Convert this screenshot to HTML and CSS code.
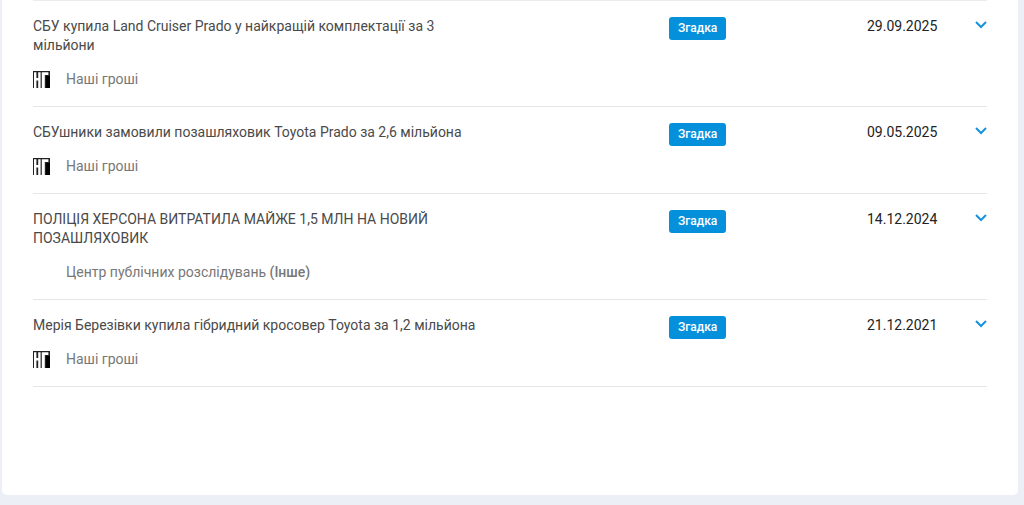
FILE: index.html
```html
<!DOCTYPE html>
<html lang="uk">

<head>
    <meta charset="UTF-8">
    <meta name="viewport" content="width=device-width, initial-scale=1.0">
    <title>Згадки</title>
    <link rel="stylesheet" href="styles.css">
</head>

<body>
    <!-- icons shared by the rows -->
    <svg class="sprite" width="0" height="0" aria-hidden="true">
        <symbol id="logo" viewBox="0 0 17 17">
            <path d="M0 0h17v17H0z" fill="#222" />
            <path d="M1 1.2h2.4V7h1.8V1.2h2.4V17H5.2V9.5H3.4V17H1z" fill="#fff" />
            <path d="M8.8 1.2h6.6V4h-3.6v13H8.8z" fill="#fff" />
            <path d="M13 5h4v12h-4z" fill="#000" />
        </symbol>
        <symbol id="chevron" viewBox="0 0 12 8">
            <path d="M1 1l5 5 5-5" fill="none" stroke="#1593dc" stroke-width="2" />
        </symbol>
    </svg>

    <main class="card">
        <ul class="list">
            <li class="row">
                <div class="info">
                    <a class="title" href="#">СБУ купила Land Cruiser Prado у найкращій комплектації за 3 мільйони</a>
                    <div class="source">
                        <span class="logo"><svg><use href="#logo" /></svg></span>
                        <span>Наші гроші</span>
                    </div>
                </div>
                <div class="type"><span class="badge">Згадка</span></div>
                <time class="date" datetime="2025-09-29">29.09.2025</time>
                <button class="toggle" type="button" aria-label="Розгорнути"><svg><use href="#chevron" /></svg></button>
            </li>
            <li class="row">
                <div class="info">
                    <a class="title" href="#">СБУшники замовили позашляховик Toyota Prado за 2,6 мільйона</a>
                    <div class="source">
                        <span class="logo"><svg><use href="#logo" /></svg></span>
                        <span>Наші гроші</span>
                    </div>
                </div>
                <div class="type"><span class="badge">Згадка</span></div>
                <time class="date" datetime="2025-05-09">09.05.2025</time>
                <button class="toggle" type="button" aria-label="Розгорнути"><svg><use href="#chevron" /></svg></button>
            </li>
            <li class="row">
                <div class="info">
                    <a class="title" href="#">ПОЛІЦІЯ ХЕРСОНА ВИТРАТИЛА МАЙЖЕ 1,5 МЛН НА НОВИЙ ПОЗАШЛЯХОВИК</a>
                    <div class="source">
                        <span class="logo"></span>
                        <span>Центр публічних розслідувань <b>(Інше)</b></span>
                    </div>
                </div>
                <div class="type"><span class="badge">Згадка</span></div>
                <time class="date" datetime="2024-12-14">14.12.2024</time>
                <button class="toggle" type="button" aria-label="Розгорнути"><svg><use href="#chevron" /></svg></button>
            </li>
            <li class="row">
                <div class="info">
                    <a class="title" href="#">Мерія Березівки купила гібридний кросовер Toyota за 1,2 мільйона</a>
                    <div class="source">
                        <span class="logo"><svg><use href="#logo" /></svg></span>
                        <span>Наші гроші</span>
                    </div>
                </div>
                <div class="type"><span class="badge">Згадка</span></div>
                <time class="date" datetime="2021-12-21">21.12.2021</time>
                <button class="toggle" type="button" aria-label="Розгорнути"><svg><use href="#chevron" /></svg></button>
            </li>
        </ul>
    </main>
</body>

</html>
```
FILE: styles.css
```css
* {
    box-sizing: border-box;
}

body {
    margin: 0;
    padding: 0 6px 10px 2px;
    background-color: #ecf0f6;
    font-family: Roboto, Arial, sans-serif;
    font-size: 14px;
    line-height: 19px;
    color: #222;
}

.sprite {
    position: absolute;
}

.card {
    background-color: #fff;
    border-radius: 0 0 5px 5px;
    padding: 0 31px 108px;
}

.list {
    list-style: none;
    margin: 0;
    padding: 0;
    border-top: 1px solid #ececee;
}

.row {
    display: grid;
    grid-template-columns: calc(100% * 2 / 3) 1fr 106px 14px;
    padding: 16px 0;
    border-bottom: 1px solid #e6e6e8;
}

.title {
    display: block;
    max-width: 72%;
    color: #4a4a4a;
    text-decoration: none;
}

.source {
    display: flex;
    align-items: center;
    margin: 14px 0 1px;
    height: 20px;
    color: #777;
}

.source b {
    font-weight: 500;
}

.logo {
    width: 33px;
}

.logo svg {
    display: block;
    width: 17px;
    height: 17px;
}

.badge {
    display: block;
    width: fit-content;
    padding: 2px 9px;
    border-radius: 3px;
    background-color: #0590dc;
    color: #fff;
    font-size: 12px;
    font-weight: 500;
}

.toggle {
    align-self: start;
    justify-self: end;
    border: 0;
    padding: 4px 0;
    background: none;
    cursor: pointer;
}

.toggle svg {
    display: block;
    width: 12px;
    height: 8px;
}
```
